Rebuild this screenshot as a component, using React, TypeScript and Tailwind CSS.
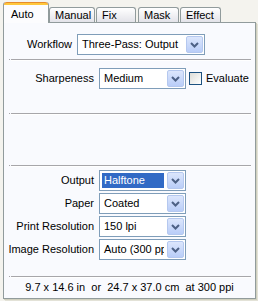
import React from "react";

const font = { fontFamily: '"Liberation Sans", Arial, sans-serif' };

function Chevron() {
    return (
        <svg width="9" height="6" viewBox="0 0 9 6">
            <path d="M1 1 L4.5 4.5 L8 1" fill="none" stroke="#4d6185" strokeWidth="2" />
        </svg>
    );
}

function Combo({ value, width, selected }: { value: string; width: string; selected?: boolean }) {
    return (
        <div className={`flex h-[21px] shrink-0 ${width} border border-[#7f9db9] bg-white`}>
            <div className="flex flex-1 min-w-0 items-center p-[2px]">
                <div className={`flex h-full w-full items-center overflow-hidden whitespace-nowrap pl-[2px] ${selected ? "bg-[#316ac5] text-white" : "text-black"}`}>
                    {value}
                </div>
            </div>
            <div className="m-px flex w-[17px] items-center justify-center rounded-[2px] border border-[#b5c8ef] bg-gradient-to-b from-[#dce6fc] to-[#b9cdf8]">
                <Chevron />
            </div>
        </div>
    );
}

function Separator() {
    return (
        <div className="ml-[5px] mr-[4px] flex">
            <div className="h-px w-px bg-[#a7a6aa]" />
            <div className="ml-px flex-1 border-t border-b border-t-[#a7a6aa] border-b-white" />
        </div>
    );
}

function Row({ label, children }: { label: string; children: React.ReactNode }) {
    return (
        <div className="flex items-center">
            <div className="w-[95px] shrink-0 whitespace-nowrap pr-[5px] text-right">{label}</div>
            {children}
        </div>
    );
}

function Tab({ label, width, active, className = "" }: { label: string; width: string; active?: boolean; className?: string }) {
    if (active) {
        return (
            <div className={`${width} relative z-10 mb-[-1px] flex h-[21px] flex-col rounded-t-[3px] border-x border-[#919b9c] bg-[#fcfcfe] ${className}`}>
                <div className="h-[3px] rounded-t-[3px] border-t border-[#e68b2c] bg-[#ffc73c]" />
                <div className="pl-[7px] pt-px">{label}</div>
            </div>
        );
    }
    return (
        <div className={`${width} flex h-[15px] items-center rounded-t-[3px] border border-b-0 border-[#919b9c] bg-gradient-to-b from-white to-[#e3e3e9] pl-[5px] ${className}`}>
            {label}
        </div>
    );
}

export default function App() {
    return (
        <div className="h-[301px] w-[258px] overflow-hidden bg-[#f4f3ee] text-[11px] text-black" style={font}>
            <div className="flex h-[22px] items-end pl-[3px]">
                <Tab label="Auto" width="w-[46px]" active />
                <Tab label="Manual" width="w-[46px]" />
                <Tab label="Fix" width="w-[40px]" className="ml-px" />
                <Tab label="Mask" width="w-[41px]" className="ml-[2px]" />
                <Tab label="Effect" width="w-[41px]" className="ml-px" />
            </div>

            <div className="ml-[3px] flex h-[277px] w-[253px] flex-col border border-[#919b9c] bg-[#f9fafe] shadow-[1px_1px_0_#d0d0bf,2px_2px_0_#e3e2d7]">
                <div className="mt-[11px] flex items-center">
                    <div className="w-[73px] shrink-0 pr-[5px] text-right">Workflow</div>
                    <Combo value="Three-Pass: Output" width="w-[128px]" />
                </div>
                <div className="mt-[4px]">
                    <Separator />
                </div>

                <div className="mt-[7px]">
                    <Row label="Sharpeness">
                        <Combo value="Medium" width="w-[87px]" />
                        <div className="ml-[3px] h-[13px] w-[13px] shrink-0 border border-[#1c5180] bg-gradient-to-br from-[#dcdcd7] to-white" />
                        <span className="ml-[4px] whitespace-nowrap">Evaluate</span>
                    </Row>
                </div>

                <div className="mt-[24px]">
                    <Separator />
                </div>
                <div className="mt-[50px]">
                    <Separator />
                </div>

                <div className="mt-[3px] flex flex-col gap-[2px]">
                    <Row label="Output">
                        <Combo value="Halftone" width="w-[87px]" selected />
                    </Row>
                    <Row label="Paper">
                        <Combo value="Coated" width="w-[87px]" />
                    </Row>
                    <Row label="Print Resolution">
                        <Combo value="150 lpi" width="w-[87px]" />
                    </Row>
                    <Row label="Image Resolution">
                        <Combo value="Auto (300 ppi)" width="w-[87px]" />
                    </Row>
                </div>

                <div className="mt-[16px]">
                    <Separator />
                </div>
                <div className="flex flex-1 items-center justify-center whitespace-pre pb-px">
                    9.7 x 14.6 in  or  24.7 x 37.0 cm  at 300 ppi
                </div>
            </div>
        </div>
    );
}
